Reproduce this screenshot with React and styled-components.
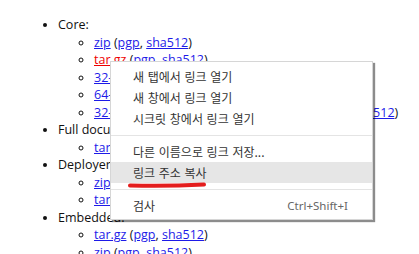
import React from 'react';
import styled, { createGlobalStyle } from 'styled-components';

const GlobalStyle = createGlobalStyle`
  html, body {
    margin: 0;
    padding: 0;
    background: #fff;
    overflow: hidden;
  }
  body {
    width: 419px;
    height: 254px;
    font-family: "Open Sans", "Liberation Sans", sans-serif;
  }
`;

const Page = styled.div`
  position: relative;
  width: 419px;
  height: 254px;
  overflow: hidden;
`;

const List = styled.ul`
  margin: 16px 0 0;
  padding-left: 58px;
  list-style: disc;
  font-size: 12.5px;
  line-height: 17.5px;
  color: #111;
  white-space: nowrap;
`;

const SubList = styled.ul`
  margin: 0;
  padding-left: 36px;
  list-style: circle;
`;

const Link = styled.a`
  color: ${p => (p.$active ? '#e00' : '#1d1ae8')};
  text-decoration: underline;
`;

const Menu = styled.div`
  position: absolute;
  left: 110px;
  top: 61px;
  width: 261px;
  padding: 4px 0 3px;
  background: #fff;
  border: 1px solid #d6d6d6;
  box-shadow: 2px 2px 1px rgba(0, 0, 0, 0.45);
  font-family: "Noto Sans CJK KR", "Noto Sans", sans-serif;
  font-size: 12px;
  color: #333;
`;

const Item = styled.div`
  display: flex;
  justify-content: space-between;
  align-items: center;
  height: 21px;
  padding: 0 24px 0 22px;
  background: ${p => (p.$hover ? '#e6e6e6' : 'transparent')};
  word-spacing: 1px;
`;

const Shortcut = styled.span`
  color: #666;
  font-family: "Noto Sans", sans-serif;
  font-size: 11.5px;
`;

const Separator = styled.div`
  height: 1px;
  margin: 6px 0 5px;
  background: #e4e4e4;
`;

const Mark = styled.svg`
  position: absolute;
  left: 126px;
  top: 181px;
`;

const items = (name, links, active) => (
  <li>
    <Link $active={active}>{name}</Link> (<Link>pgp</Link>, <Link>sha512</Link>)
  </li>
);

export default function App() {
  return (
    <Page>
      <GlobalStyle />
      <List>
        <li>
          Core:
          <SubList>
            {items('zip')}
            {items('tar.gz', null, true)}
            {items('32-bit Windows zip')}
            {items('64-bit Windows zip')}
            {items('32-bit/64-bit Windows Service Installer')}
          </SubList>
        </li>
        <li>
          Full documentation:
          <SubList>{items('tar.gz')}</SubList>
        </li>
        <li>
          Deployer:
          <SubList>
            {items('zip')}
            {items('tar.gz')}
          </SubList>
        </li>
        <li>
          Embedded:
          <SubList>
            {items('tar.gz')}
            {items('zip')}
          </SubList>
        </li>
      </List>

      <Menu>
        <Item>새 탭에서 링크 열기</Item>
        <Item>새 창에서 링크 열기</Item>
        <Item>시크릿 창에서 링크 열기</Item>
        <Separator />
        <Item>다른 이름으로 링크 저장...</Item>
        <Item $hover>링크 주소 복사</Item>
        <Separator />
        <Item>
          검사
          <Shortcut>Ctrl+Shift+I</Shortcut>
        </Item>
      </Menu>

      <Mark width="82" height="8" viewBox="0 0 82 8">
        <path d="M4 4.5 Q40 5.5 78 3.5" stroke="#e41d1d" strokeWidth="4" strokeLinecap="round" fill="none" />
      </Mark>
    </Page>
  );
}
